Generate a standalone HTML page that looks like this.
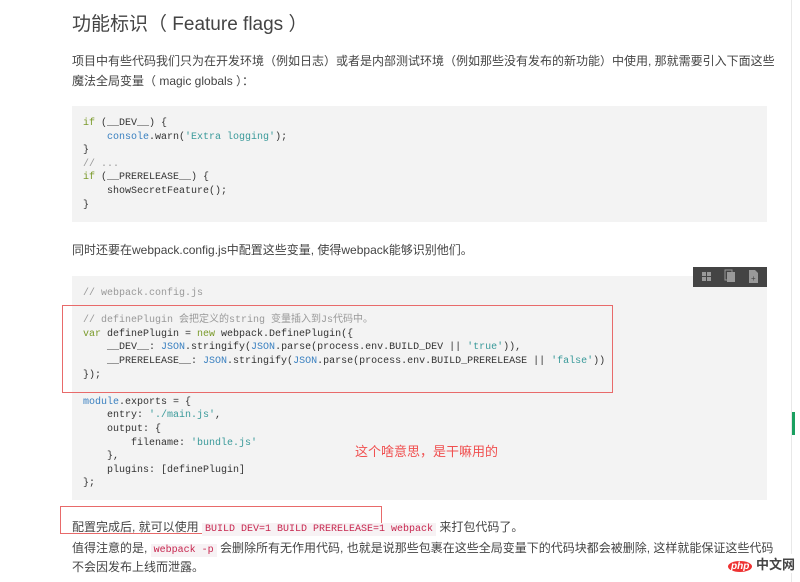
<!DOCTYPE html>
<html><head><meta charset="utf-8"><style>
body{margin:0;width:800px;height:582px;background:#fff;position:relative;overflow:hidden;font-family:"Liberation Sans","Noto Sans CJK SC",sans-serif;color:#333}
.a{position:absolute;white-space:nowrap}
h1{position:absolute;left:72px;top:9px;margin:0;font-size:19px;font-weight:normal;color:#444}
.p{font-size:12px;color:#444}
pre{position:absolute;margin:0;background:#f3f3f3;font-family:"Liberation Mono","Noto Sans CJK SC",monospace;font-size:10px;line-height:13.6px;color:#333;box-sizing:border-box;padding-left:11px}
.k{color:#7a9a2a}.c{color:#999}.s{color:#3a9a9a}.b{color:#3a80c0}
.red{position:absolute;border:1px solid #e86a6a}
code{font-family:"Liberation Mono",monospace;font-size:10px;color:#c7254e;background:#f7f2f4;padding:1px 3px}
</style></head><body>
<h1>功能标识（ Feature flags ）</h1>
<div class="a p" style="left:72px;top:52px">项目中有些代码我们只为在开发环境（例如日志）或者是内部测试环境（例如那些没有发布的新功能）中使用, 那就需要引入下面这些</div>
<div class="a p" style="left:72px;top:72px">魔法全局变量（ magic globals ）：</div>
<pre style="left:72px;top:106px;width:695px;height:116px;padding-top:11px"><span class="k">if</span> (__DEV__) {
    <span class="b">console</span>.warn(<span class="s">'Extra logging'</span>);
}
<span class="c">// ...</span>
<span class="k">if</span> (__PRERELEASE__) {
    showSecretFeature();
}</pre>
<div class="a p" style="left:72px;top:241px">同时还要在webpack.config.js中配置这些变量, 使得webpack能够识别他们。</div>
<pre style="left:72px;top:276px;width:695px;height:224px;padding-top:11px"><span class="c">// webpack.config.js</span>

<span class="c">// definePlugin 会把定义的string 变量插入到Js代码中。</span>
<span class="k">var</span> definePlugin = <span class="k">new</span> webpack.DefinePlugin({
    __DEV__: <span class="b">JSON</span>.stringify(<span class="b">JSON</span>.parse(process.env.BUILD_DEV || <span class="s">'true'</span>)),
    __PRERELEASE__: <span class="b">JSON</span>.stringify(<span class="b">JSON</span>.parse(process.env.BUILD_PRERELEASE || <span class="s">'false'</span>))
});

<span class="b">module</span>.exports = {
    entry: <span class="s">'./main.js'</span>,
    output: {
        filename: <span class="s">'bundle.js'</span>
    },
    plugins: [definePlugin]
};</pre>
<div class="a" style="left:693px;top:267px;width:74px;height:20px;background:#444"></div>
<svg class="a" style="left:693px;top:267px" width="74" height="20"><g fill="#999"><rect x="9" y="5" width="4" height="4"/><rect x="14" y="5" width="4" height="4"/><rect x="9" y="10" width="4" height="4"/><rect x="14" y="10" width="4" height="4"/><rect x="34" y="5" width="8" height="10"/><rect x="32" y="3" width="7" height="10" fill="none" stroke="#999"/><path d="M56 3h6l3 3v10h-9z"/></g><text x="58" y="14" font-size="8" fill="#444">+</text></svg>
<div class="red" style="left:62px;top:305px;width:549px;height:86px"></div>
<div class="a" style="left:355px;top:441px;font-size:13px;color:#f05050">这个啥意思，是干嘛用的</div>
<div class="red" style="left:60px;top:506px;width:320px;height:26px"></div>
<div class="a p" style="left:72px;top:518px">配置完成后, 就可以使用 <code>BUILD DEV=1 BUILD PRERELEASE=1 webpack</code> 来打包代码了。</div>
<div class="a p" style="left:72px;top:539px">值得注意的是, <code>webpack -p</code> 会删除所有无作用代码, 也就是说那些包裹在这些全局变量下的代码块都会被删除, 这样就能保证这些代码</div>
<div class="a p" style="left:72px;top:558px">不会因发布上线而泄露。</div>
<div class="a" style="left:791px;top:0;width:1px;height:582px;background:#e8e8e8"></div>
<div class="a" style="left:792px;top:412px;width:3px;height:23px;background:#1aa060"></div>
<div class="a" style="left:728px;top:554px;font-size:13px;font-weight:bold;color:#444;background:#fff"><span style="background:#e33;color:#fff;border-radius:50%;padding:0 3px;font-size:10px;font-style:italic">php</span> 中文网</div>
</body></html>
